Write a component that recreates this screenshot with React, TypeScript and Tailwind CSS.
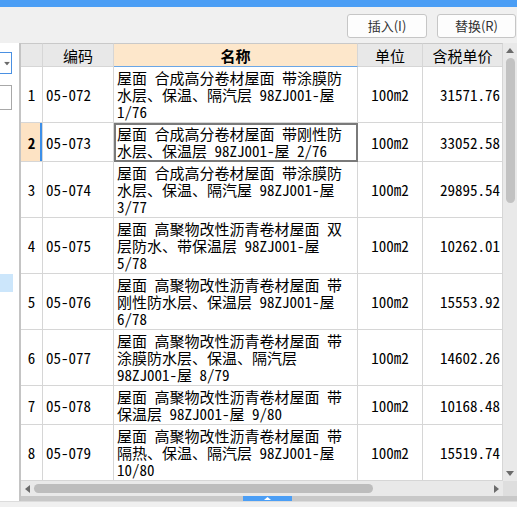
import React from "react";

type Row = {
  n: number;
  code: string;
  lines: string[];
  unit: string;
  price: string;
};

const rows: Row[] = [
  { n: 1, code: "05-072", lines: ["屋面 合成高分卷材屋面 带涂膜防", "水层、保温、隔汽层 98ZJ001-屋", "1/76"], unit: "100m2", price: "31571.76" },
  { n: 2, code: "05-073", lines: ["屋面 合成高分卷材屋面 带刚性防", "水层、保温层 98ZJ001-屋 2/76"], unit: "100m2", price: "33052.58" },
  { n: 3, code: "05-074", lines: ["屋面 合成高分卷材屋面 带涂膜防", "水层、保温、隔汽屋 98ZJ001-屋", "3/77"], unit: "100m2", price: "29895.54" },
  { n: 4, code: "05-075", lines: ["屋面 高聚物改性沥青卷材屋面 双", "层防水、带保温层 98ZJ001-屋", "5/78"], unit: "100m2", price: "10262.01" },
  { n: 5, code: "05-076", lines: ["屋面 高聚物改性沥青卷材屋面 带", "刚性防水层、保温层 98ZJ001-屋", "6/78"], unit: "100m2", price: "15553.92" },
  { n: 6, code: "05-077", lines: ["屋面 高聚物改性沥青卷材屋面 带", "涂膜防水层、保温、隔汽层", "98ZJ001-屋 8/79"], unit: "100m2", price: "14602.26" },
  { n: 7, code: "05-078", lines: ["屋面 高聚物改性沥青卷材屋面 带", "保温层 98ZJ001-屋 9/80"], unit: "100m2", price: "10168.48" },
  { n: 8, code: "05-079", lines: ["屋面 高聚物改性沥青卷材屋面 带", "隔热、保温、隔汽层 98ZJ001-屋", "10/80"], unit: "100m2", price: "15519.74" },
];

const SELECTED = 2;

function Tri({ dir, className }: { dir: "up" | "down" | "left" | "right"; className?: string }) {
  const pts = {
    up: "0,5 4,0 8,5",
    down: "0,0 8,0 4,5",
    left: "5,0 5,8 0,4",
    right: "0,0 0,8 5,4",
  }[dir];
  const w = dir === "up" || dir === "down" ? 8 : 5;
  const h = dir === "up" || dir === "down" ? 5 : 8;
  return (
    <svg width={w} height={h} viewBox={`0 0 ${w} ${h}`} className={className}>
      <polygon points={pts} fill="#6b6b6b" />
    </svg>
  );
}

export default function App() {
  const mono = "font-['Noto_Sans_Mono_CJK_SC','Noto_Sans_CJK_SC',monospace]";
  const cell = "border-r border-b border-[#d6d6d6]";

  return (
    <div className={`flex h-[507px] w-[517px] flex-col overflow-hidden bg-[#f0f0f0] text-black ${mono}`}>
      {/* barra azul do topo */}
      <div className="h-[7px] bg-[#4b9ef5]" />

      {/* barra de ferramentas */}
      <div className="flex h-[36px] items-start justify-end gap-[10px] pt-[7px] pr-[1px] font-['Noto_Sans_CJK_SC',sans-serif] text-[13px] text-[#333]">
        <button className="flex h-[24px] w-[80px] items-center justify-center rounded-[3px] border border-[#c6c6c6] bg-[#fdfdfd]">
          插入(I)
        </button>
        <button className="flex h-[24px] w-[79px] items-center justify-center rounded-[3px] border border-[#c6c6c6] bg-[#fdfdfd]">
          替换(R)
        </button>
      </div>

      <div className="flex h-[458px]">
        {/* painel esquerdo (cortado) */}
        <div className="flex w-[19px] flex-col bg-white pt-[9px]">
          <div className="flex h-[22px] w-[12px] items-center border-y border-r border-[#4a90e2] pl-[3px]">
            <Tri dir="down" className="scale-75" />
          </div>
          <div className="mt-[11px] h-[25px] w-[12px] border-y border-r border-[#a8a8a8]" />
          <div className="mt-[164px] h-[18px] w-[13px] bg-[#cce6fb]" />
        </div>

        <div className="flex flex-1 flex-col border-l-2 border-[#c4c4c4]">
          <div className="flex h-[438px]">
            {/* tabela */}
            <div className="w-[482px] overflow-hidden bg-white">
              <div className="grid h-[24px] grid-cols-[22px_71px_244px_65px_80px] text-[15px] leading-[17px]">
                <div className={`${cell} border-t border-t-[#c9c9c9] bg-[#e8e8e8]`} />
                <div className={`${cell} flex items-center justify-center border-t border-t-[#c9c9c9] bg-[#e8e8e8]`}>编码</div>
                <div className={`${cell} flex items-center justify-center border-t border-t-[#c9c9c9] border-b-[#6aa6e6] bg-[#fde7cb] font-bold`}>名称</div>
                <div className={`${cell} flex items-center justify-center border-t border-t-[#c9c9c9] bg-[#e8e8e8]`}>单位</div>
                <div className={`${cell} flex items-center justify-center border-t border-t-[#c9c9c9] bg-[#e8e8e8]`}>含税单价</div>
              </div>

              {rows.map((r) => {
                const sel = r.n === SELECTED;
                return (
                  <div key={r.n} className="grid grid-cols-[22px_71px_244px_65px_80px] text-[15px] leading-[17px]">
                    <div
                      className={`${cell} flex items-center justify-center ${
                        sel ? "bg-[#fde3c4] font-bold shadow-[inset_-2px_0_0_#3d8fe8]" : ""
                      }`}
                    >
                      {r.n}
                    </div>
                    <div className={`${cell} flex items-center pl-[3px]`}>{r.code}</div>
                    <div
                      className={`${cell} py-[2px] pl-[3px] whitespace-pre ${
                        sel ? "outline-2 -outline-offset-2 outline-solid outline-[#7a7a7a]" : ""
                      }`}
                    >
                      {r.lines.map((l, i) => (
                        <div key={i}>{l}</div>
                      ))}
                    </div>
                    <div className={`${cell} flex items-center justify-center`}>{r.unit}</div>
                    <div className={`${cell} flex items-center justify-end pr-[2px]`}>{r.price}</div>
                  </div>
                );
              })}
            </div>

            {/* barra de rolagem vertical */}
            <div className="flex w-[14px] flex-col items-center bg-[#e9e9e9]">
              <div className="flex h-[15px] items-center justify-center">
                <Tri dir="up" />
              </div>
              <div className="h-[145px] w-[9px] rounded-full bg-[#c2c2c2]" />
              <div className="flex-1" />
              <div className="flex h-[15px] items-center justify-center">
                <Tri dir="down" />
              </div>
            </div>
          </div>

          {/* barra de rolagem horizontal */}
          <div className="flex h-[15px]">
            <div className="flex w-[482px] items-center bg-[#e9e9e9]">
              <div className="flex w-[13px] justify-center">
                <Tri dir="left" />
              </div>
              <div className="h-[9px] w-[339px] rounded-full bg-[#bdbdbd]" />
              <div className="flex-1" />
              <div className="flex w-[13px] justify-center">
                <Tri dir="right" />
              </div>
            </div>
            <div className="w-[14px] bg-[#dedede]" />
          </div>

          {/* divisor */}
          <div className="flex h-[5px] bg-[#c8c8c8] pl-[222px]">
            <div className="flex w-[49px] items-center justify-center bg-[#4b9ef5]">
              <svg width="7" height="3" viewBox="0 0 7 3">
                <polygon points="0,3 3.5,0 7,3" fill="#fff" />
              </svg>
            </div>
          </div>
        </div>
      </div>

      <div className="h-[6px] border-t border-[#dcdcdc] bg-[#f0f0f0]" />
    </div>
  );
}
